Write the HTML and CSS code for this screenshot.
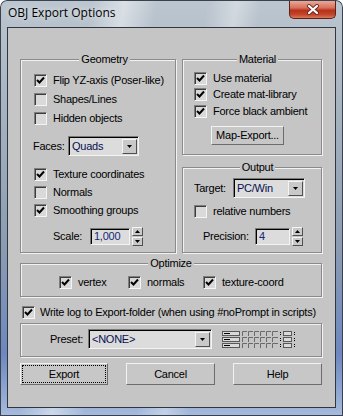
FILE: index.html
```html
<!DOCTYPE html>
<html>
<head>
<meta charset="utf-8">
<link rel="stylesheet" href="styles.css">
</head>
<body>
<div class="window">
  <div class="titlebar">
    <span class="title">OBJ Export Options</span>
    <div class="close">
      <svg width="14" height="11" viewBox="0 0 14 11"><path d="M3 2 L11 9 M11 2 L3 9" stroke="#6b2a20" stroke-width="4" stroke-linecap="round"/><path d="M3 2 L11 9 M11 2 L3 9" stroke="#fff" stroke-width="2.2" stroke-linecap="round"/></svg>
    </div>
  </div>
  <div class="client">
    <div class="top">
      <div class="group geo">
        <div class="legend">Geometry</div>
        <div class="rows r19">
          <div class="chk"><span class="cb"><svg viewBox="0 0 11 11"><polyline points="2,5 4.5,7.5 9,2.5"/></svg></span>Flip YZ-axis (Poser-like)</div>
          <div class="chk"><span class="cb"></span>Shapes/Lines</div>
          <div class="chk"><span class="cb"></span>Hidden objects</div>
        </div>
        <div class="line faces">
          <span class="lbl w35">Faces:</span>
          <div class="dd w71"><span class="val">Quads</span><span class="arr"><svg width="5" height="3" viewBox="0 0 5 3"><path d="M0 0 H5 L2.5 3 Z"/></svg></span></div>
        </div>
        <div class="rows r18">
          <div class="chk"><span class="cb"><svg viewBox="0 0 11 11"><polyline points="2,5 4.5,7.5 9,2.5"/></svg></span>Texture coordinates</div>
          <div class="chk"><span class="cb"></span>Normals</div>
          <div class="chk"><span class="cb"><svg viewBox="0 0 11 11"><polyline points="2,5 4.5,7.5 9,2.5"/></svg></span>Smoothing groups</div>
        </div>
        <div class="line spinrow scale">
          <span class="lbl w35">Scale:</span>
          <span class="field w40">1,000</span>
          <span class="arrows"><span class="sb"><svg width="5" height="3" viewBox="0 0 5 3"><path d="M0 3 H5 L2.5 0 Z"/></svg></span><span class="sb"><svg width="5" height="3" viewBox="0 0 5 3"><path d="M0 0 H5 L2.5 3 Z"/></svg></span></span>
        </div>
      </div>
      <div class="rightcol">
        <div class="group mat">
          <div class="legend">Material</div>
          <div class="rows r16">
            <div class="chk"><span class="cb"><svg viewBox="0 0 11 11"><polyline points="2,5 4.5,7.5 9,2.5"/></svg></span>Use material</div>
            <div class="chk"><span class="cb"><svg viewBox="0 0 11 11"><polyline points="2,5 4.5,7.5 9,2.5"/></svg></span>Create mat-library</div>
            <div class="chk"><span class="cb"><svg viewBox="0 0 11 11"><polyline points="2,5 4.5,7.5 9,2.5"/></svg></span>Force black ambient</div>
          </div>
          <div class="btn mapbtn">Map-Export...</div>
        </div>
        <div class="group out">
          <div class="legend">Output</div>
          <div class="line target">
            <span class="lbl w39">Target:</span>
            <div class="dd w72"><span class="val">PC/Win</span><span class="arr"><svg width="5" height="3" viewBox="0 0 5 3"><path d="M0 0 H5 L2.5 3 Z"/></svg></span></div>
          </div>
          <div class="chk relrow"><span class="cb"></span>relative numbers</div>
          <div class="line spinrow prec">
            <span class="lbl w50">Precision:</span>
            <span class="field w35">4</span>
            <span class="arrows"><span class="sb"><svg width="5" height="3" viewBox="0 0 5 3"><path d="M0 3 H5 L2.5 0 Z"/></svg></span><span class="sb"><svg width="5" height="3" viewBox="0 0 5 3"><path d="M0 0 H5 L2.5 3 Z"/></svg></span></span>
          </div>
        </div>
      </div>
    </div>
    <div class="group opt">
      <div class="legend">Optimize</div>
      <div class="optrow">
        <div class="chk w69"><span class="cb"><svg viewBox="0 0 11 11"><polyline points="2,5 4.5,7.5 9,2.5"/></svg></span>vertex</div>
        <div class="chk w75"><span class="cb"><svg viewBox="0 0 11 11"><polyline points="2,5 4.5,7.5 9,2.5"/></svg></span>normals</div>
        <div class="chk"><span class="cb"><svg viewBox="0 0 11 11"><polyline points="2,5 4.5,7.5 9,2.5"/></svg></span>texture-coord</div>
      </div>
    </div>
    <div class="chk logrow"><span class="cb"><svg viewBox="0 0 11 11"><polyline points="2,5 4.5,7.5 9,2.5"/></svg></span>Write log to Export-folder (when using #noPrompt in scripts)</div>
    <div class="group preset">
      <span class="lbl w38">Preset:</span>
      <div class="dd w124"><span class="val">&lt;NONE&gt;</span><span class="arr"><svg width="5" height="3" viewBox="0 0 5 3"><path d="M0 0 H5 L2.5 3 Z"/></svg></span></div>
      <svg class="presetbar" width="78" height="19" viewBox="0 0 78 19">
        <g fill="#dadada" stroke="#5a5a5a" stroke-width="1">
          <rect x="2.5" y="1.5" width="17" height="4"/>
          <rect x="2.5" y="7.5" width="17" height="4"/>
          <rect x="2.5" y="13.5" width="17" height="4"/>
        </g>
        <g stroke="#000" stroke-width="1">
          <path d="M4 3.5 H10 M4 9.5 H10 M4 15.5 H10"/>
        </g>
        <g stroke="#6a6a6a" stroke-width="1" fill="none">
          <path d="M22.5 6 V1.5 H27 M28.5 6 V1.5 H33 M34.5 6 V1.5 H39 M40.5 6 V1.5 H45 M46.5 6 V1.5 H51"/>
          <path d="M22.5 12 V7.5 H27 M28.5 12 V7.5 H33 M34.5 12 V7.5 H39 M40.5 12 V7.5 H45 M46.5 12 V7.5 H51"/>
          <path d="M22.5 18 V13.5 H27 M28.5 18 V13.5 H33 M34.5 18 V13.5 H39 M40.5 18 V13.5 H45 M46.5 18 V13.5 H51"/>
          <path d="M52.5 6 V1.5 H58 M52.5 12 V7.5 H58 M52.5 18 V13.5 H58"/>
        </g>
        <g fill="#dadada" stroke="#5a5a5a" stroke-width="1">
          <rect x="63.5" y="1.5" width="8" height="4"/>
          <rect x="63.5" y="7.5" width="8" height="4"/>
          <rect x="63.5" y="13.5" width="8" height="4"/>
        </g>
        <g fill="#000">
          <rect x="60" y="2" width="1" height="1"/><rect x="60" y="4" width="1" height="1"/>
          <rect x="60" y="8" width="1" height="1"/><rect x="60" y="10" width="1" height="1"/>
          <rect x="60" y="14" width="1" height="1"/><rect x="60" y="16" width="1" height="1"/>
          <rect x="74" y="2" width="1" height="1"/><rect x="74" y="4" width="1" height="1"/>
          <rect x="74" y="8" width="1" height="1"/><rect x="74" y="10" width="1" height="1"/>
          <rect x="74" y="14" width="1" height="1"/><rect x="74" y="16" width="1" height="1"/>
        </g>
      </svg>
    </div>
    <div class="buttons">
      <div class="btn focus w88">Export</div>
      <div class="btn">Cancel</div>
      <div class="btn">Help</div>
    </div>
  </div>
</div>
</body>
</html>
```
FILE: styles.css
```css
html, body {
  margin: 0;
  padding: 0;
}

.window {
  width: 343px;
  height: 416px;
  box-sizing: border-box;
  display: flex;
  flex-direction: column;
  padding: 0 7px 8px 7px;
  border-radius: 7px 7px 0 0;
  background:
    linear-gradient(100deg, rgba(255,255,255,0) 22%, rgba(255,255,255,0.45) 30%, rgba(255,255,255,0) 38%, rgba(255,255,255,0) 50%, rgba(255,255,255,0.35) 57%, rgba(255,255,255,0) 63%),
    linear-gradient(180deg, #bcc6d0 0%, #a3b0be 30%, #8a9bb2 60%, #6d88c0 85%, #a6bbdc 100%);
  box-shadow: inset 0 0 0 1px #39424d;
}

.titlebar {
  height: 27px;
  display: flex;
  justify-content: space-between;
  align-items: flex-start;
}

.title {
  font: 12px "Open Sans", "Noto Sans", sans-serif;
  line-height: 16px;
  margin-top: 5px;
  padding-left: 1px;
  color: #000;
  text-shadow: 0 0 6px rgba(255,255,255,0.9);
}

.close {
  width: 47px;
  height: 18px;
  box-sizing: border-box;
  margin-top: 1px;
  border: 1px solid #5b2219;
  border-top: none;
  border-radius: 0 0 5px 5px;
  background: linear-gradient(180deg, #e9a99a 0%, #d8705b 40%, #b8311b 55%, #c3452b 80%, #d77a58 100%);
  display: flex;
  align-items: center;
  justify-content: center;
}

.client {
  flex: 1;
  background: #c5c5c5;
  border: 1px solid #2f363f;
  padding: 31px 13px 0 12px;
  display: flex;
  flex-direction: column;
  font: 11px "Liberation Sans", Arial, sans-serif;
  letter-spacing: -0.25px;
  color: #000;
  line-height: 13px;
}

.top {
  display: grid;
  grid-template-columns: 156px 140px;
  column-gap: 6px;
}

.rightcol {
  display: flex;
  flex-direction: column;
  gap: 12px;
}

.group {
  border: 1px solid #8a8a8a;
  box-shadow: inset 1px 1px 0 #f2f2f2, 1px 1px 0 #f2f2f2;
}

.legend {
  width: fit-content;
  margin: -7px auto 0;
  padding: 0 2px;
  background: #c5c5c5;
  line-height: 13px;
}

.geo {
  padding: 0 0 0 13px;
}

.mat, .out {
  padding-left: 11px;
}

.mat {
  padding-bottom: 9px;
}

.out {
  padding-bottom: 6px;
}

.rows {
  display: flex;
  flex-direction: column;
}

.r19 {
  margin-top: 5px;
}
.r19 .chk { height: 19px; }

.r18 {
  margin-top: 9px;
}
.r18 .chk { height: 18px; }

.r16 {
  margin-top: 4px;
}
.r16 .chk { height: 16.5px; }

.chk {
  display: flex;
  align-items: center;
  gap: 6px;
  white-space: nowrap;
}

.cb {
  width: 13px;
  height: 13px;
  flex: none;
  box-sizing: border-box;
  border: 1px solid;
  border-color: #7e7e7e #f4f4f4 #f4f4f4 #7e7e7e;
  box-shadow: inset 1px 1px 0 #3c3c3c;
  background: #d9d9d9;
}

.cb svg {
  display: block;
  width: 11px;
  height: 11px;
}

.cb polyline {
  fill: none;
  stroke: #000;
  stroke-width: 2;
}

.line {
  display: flex;
  align-items: center;
}

.lbl {
  flex: none;
  white-space: nowrap;
}

.w35 { width: 35px; }
.w38 { width: 38px; }
.w39 { width: 39px; }
.w40 { width: 40px; }
.w50 { width: 50px; }
.w69 { width: 69px; }
.w71 { width: 71px; }
.w72 { width: 72px; }
.w75 { width: 75px; }
.w88 { width: 88px !important; }
.w124 { width: 124px; }

.faces {
  margin-top: 8px;
  margin-left: -1px;
}

.scale {
  margin-top: 8px;
  margin-left: 19px;
}

.spinrow {
  height: 19px;
  gap: 2px;
}

.prec {
  margin-top: 7px;
  margin-left: 9px;
}

.target {
  margin-top: 4px;
}

.relrow {
  margin-top: 5px;
  height: 17px;
}

.dd {
  display: flex;
  height: 20px;
  box-sizing: border-box;
  border: 1px solid;
  border-color: #7a7a7a #f4f4f4 #f4f4f4 #7a7a7a;
  box-shadow: inset 1px 1px 0 #000;
  background: #dcdcdc;
  flex: none;
}

.dd .val {
  flex: 1;
  padding-left: 3px;
  padding-top: 1px;
  line-height: 17px;
  color: #061050;
  white-space: nowrap;
}

.dd .arr {
  width: 15px;
  margin: 2px 1px 1px 0;
  box-sizing: border-box;
  background: #c9c9c9;
  border: 1px solid;
  border-color: #f4f4f4 #505050 #505050 #f4f4f4;
  display: flex;
  align-items: center;
  justify-content: center;
}

.field {
  height: 17px;
  box-sizing: border-box;
  border: 1px solid;
  border-color: #7a7a7a #f4f4f4 #f4f4f4 #7a7a7a;
  box-shadow: inset 1px 1px 0 #000;
  background: #dcdcdc;
  padding-left: 3px;
  line-height: 15px;
  color: #14287a;
  flex: none;
}

.arrows {
  display: flex;
  flex-direction: column;
  width: 11px;
  height: 19px;
  gap: 1px;
  flex: none;
}

.sb {
  flex: 1;
  box-sizing: border-box;
  background: #c9c9c9;
  border: 1px solid;
  border-color: #f4f4f4 #505050 #505050 #f4f4f4;
  display: flex;
  align-items: center;
  justify-content: center;
}

.btn {
  width: 89px;
  height: 22px;
  box-sizing: border-box;
  border: 1px solid;
  border-color: #f2f2f2 #6c6c6c #6c6c6c #f2f2f2;
  background: #c7c7c7;
  display: flex;
  align-items: center;
  justify-content: center;
  white-space: nowrap;
}

.mapbtn {
  width: 73px;
  height: 19px;
  margin-top: 6.5px;
  margin-left: 17px;
}

.focus {
  outline: 1px dotted #000;
  outline-offset: -3px;
}

.opt {
  margin-top: 10px;
  padding-bottom: 6px;
}

.optrow {
  display: flex;
  height: 16px;
  margin-top: 4px;
  padding-left: 38px;
}

.logrow {
  margin-top: 7px;
  height: 17px;
  padding-left: 2px;
  gap: 5px;
}

.preset {
  margin-top: 2px;
  padding: 5px 0 7px 29px;
  display: flex;
  align-items: center;
}

.presetbar {
  display: block;
  margin-left: 8px;
}

.buttons {
  margin-top: 6px;
  display: flex;
  justify-content: space-between;
}
```
